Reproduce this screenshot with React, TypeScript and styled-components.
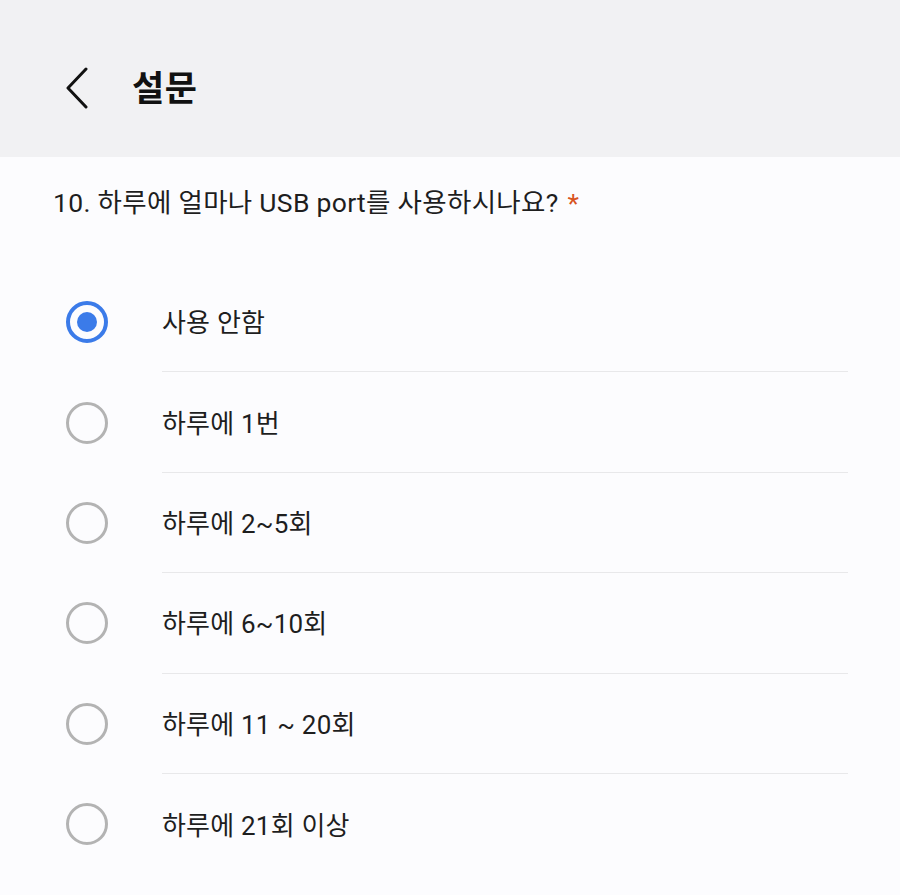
import styled, { createGlobalStyle } from 'styled-components';

const GlobalStyle = createGlobalStyle`
  html, body {
    margin: 0;
    padding: 0;
    background: #fcfcfe;
    font-family: Roboto, "Noto Sans CJK KR", "Noto Sans", sans-serif;
    -webkit-font-smoothing: antialiased;
  }
`;

const Page = styled.div`
  width: 900px;
  min-height: 895px;
  background: #fcfcfe;
`;

const Header = styled.header`
  height: 157px;
  background: #f1f1f3;
  display: flex;
  align-items: center;
  padding: 18px 0 0 64px;
  box-sizing: border-box;
`;

const BackButton = styled.button`
  border: 0;
  background: transparent;
  padding: 0;
  width: 26px;
  height: 44px;
  display: flex;
  align-items: center;
  justify-content: center;
  cursor: pointer;
`;

const Title = styled.h1`
  margin: -4px 0 0 42px;
  font-size: 35px;
  font-weight: 700;
  color: #111;
  letter-spacing: 0.5px;
`;

const Question = styled.div`
  padding: 24px 0 0 53px;
  height: 115px;
  box-sizing: border-box;
  font-size: 26.5px;
  letter-spacing: 0.3px;
  color: #1e1e1e;
`;

const Required = styled.span`
  color: #d8541f;
  margin-left: 9px;
`;

const OptionList = styled.div`
  display: flex;
  flex-direction: column;
`;

const Row = styled.label`
  display: flex;
  align-items: stretch;
  height: 100.4px;
  cursor: pointer;
`;

const RadioCell = styled.div`
  width: 162px;
  padding-left: 66px;
  box-sizing: border-box;
  display: flex;
  align-items: center;
`;

const Radio = styled.span<{ $checked?: boolean }>`
  width: 42px;
  height: 42px;
  border-radius: 50%;
  box-sizing: border-box;
  border: ${p => (p.$checked ? '4px solid #3b7be9' : '3px solid #b3b3b3')};
  display: flex;
  align-items: center;
  justify-content: center;

  &::after {
    content: '';
    display: ${p => (p.$checked ? 'block' : 'none')};
    width: 20px;
    height: 20px;
    border-radius: 50%;
    background: #3b7be9;
  }
`;

const Label = styled.div<{ $last?: boolean }>`
  flex: 1;
  margin-right: 52px;
  display: flex;
  align-items: center;
  font-size: 26px;
  letter-spacing: 0.2px;
  color: #1e1e1e;
  border-bottom: ${p => (p.$last ? 'none' : '1.5px solid #e8e8ea')};
  padding-bottom: 2px;
`;

const options = [
  '사용 안함',
  '하루에 1번',
  '하루에 2~5회',
  '하루에 6~10회',
  '하루에 11 ~ 20회',
  '하루에 21회 이상',
];

export default function App() {
  const selected = 0;
  return (
    <Page>
      <GlobalStyle />
      <Header>
        <BackButton aria-label="back">
          <svg width="24" height="42" viewBox="0 0 24 42" fill="none">
            <path d="M21 2 L3 21 L21 40" stroke="#111" strokeWidth="3" strokeLinecap="round" strokeLinejoin="round" />
          </svg>
        </BackButton>
        <Title>설문</Title>
      </Header>
      <Question>
        10. 하루에 얼마나 USB port를 사용하시나요?<Required>*</Required>
      </Question>
      <OptionList>
        {options.map((opt, i) => (
          <Row key={opt}>
            <RadioCell>
              <Radio $checked={i === selected} />
            </RadioCell>
            <Label $last={i === options.length - 1}>{opt}</Label>
          </Row>
        ))}
      </OptionList>
    </Page>
  );
}
